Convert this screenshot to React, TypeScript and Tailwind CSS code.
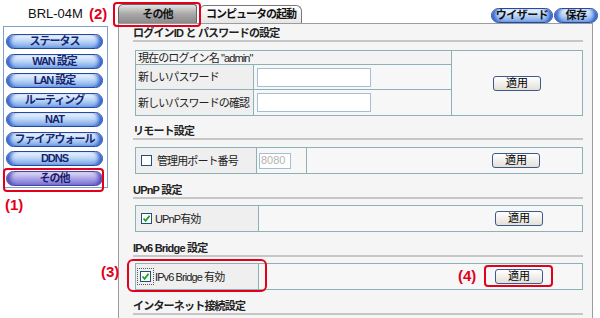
import React from "react";

const FONT = "font-['Liberation_Sans','Noto_Sans_CJK_JP',sans-serif]";

function NavButton({ label, active }: { label: string; active?: boolean }) {
  return (
    <div
      className={`h-[15px] w-[97px] rounded-full border flex items-center justify-center text-[11px] font-bold leading-none tracking-[-1px] ${
        active
          ? "border-[#4a44a8] bg-linear-to-b from-[#e2e0f8] via-[#aaa4e8] to-[#7a73d2] text-[#1c1a6a] shadow-[inset_6px_0_4px_-3px_#4c44b0,inset_-6px_0_4px_-3px_#4c44b0]"
          : "border-[#2449a3] bg-linear-to-b from-[#f0f6fe] via-[#b9d4f6] to-[#77a3e6] text-[#14246e] shadow-[inset_6px_0_4px_-3px_#2458c8,inset_-6px_0_4px_-3px_#2458c8]"
      }`}
    >
      {label}
    </div>
  );
}

function TopButton({ label, w }: { label: string; w: string }) {
  return (
    <div
      className={`${w} h-[15px] rounded-full border border-[#2449a3] bg-linear-to-b from-[#f0f6fe] via-[#b9d4f6] to-[#77a3e6] shadow-[inset_6px_0_4px_-3px_#2458c8,inset_-6px_0_4px_-3px_#2458c8] flex items-center justify-center text-[11px] font-bold leading-none tracking-[-0.5px] text-[#111]`}
    >
      {label}
    </div>
  );
}

function ApplyButton() {
  return (
    <div className="h-[15px] w-[48px] rounded-[3px] border border-[#3d5a8e] bg-linear-to-b from-white to-[#e4e0d8] flex items-center justify-center text-[11px] leading-none text-black">
      適用
    </div>
  );
}

function Heading({ children, className = "" }: { children: React.ReactNode; className?: string }) {
  return (
    <div
      className={`h-[18px] w-[450px] border-b-2 border-[#c6c6c6] flex items-end pb-[1px] text-[11px] font-bold leading-[12px] tracking-[-0.8px] text-[#222] ${className}`}
    >
      {children}
    </div>
  );
}

function Checkbox({ checked }: { checked?: boolean }) {
  return (
    <span className="w-[11px] h-[11px] border border-[#1c5180] bg-white flex items-center justify-center shrink-0">
      {checked && (
        <svg width="9" height="9" viewBox="0 0 9 9">
          <path d="M1.5 4.5 L3.6 6.8 L7.6 1.8" stroke="#1fa01f" strokeWidth="1.8" fill="none" />
        </svg>
      )}
    </span>
  );
}

const cellB = "border border-[#8cb2b5]";
const label = "text-[11px] leading-[12px] tracking-[-0.9px] text-[#222]";

export default function App() {
  return (
    <div className={`relative w-[600px] h-[318px] overflow-hidden bg-white flex ${FONT}`}>
      {/* Left column */}
      <div className="w-[118px] shrink-0 flex flex-col">
        <div className="h-[26px] flex items-start pt-[6px] pl-[28px]">
          <span className="text-[13px] leading-[16px] text-[#111]">BRL-04M</span>
          <span className="ml-[6px] text-[15px] font-bold leading-[16px] text-[#e3001b]">(2)</span>
        </div>
        <div className="ml-[3px] w-[105px] border border-[#7e9fd0] pt-[7px] pb-[1px] pl-[2px] flex flex-col gap-[4.5px]">
          <NavButton label="ステータス" />
          <NavButton label="WAN 設定" />
          <NavButton label="LAN 設定" />
          <NavButton label="ルーティング" />
          <NavButton label="NAT" />
          <NavButton label="ファイアウォール" />
          <NavButton label="DDNS" />
          <NavButton label="その他" active />
        </div>
        <div className="mt-[9px] pl-[5px] text-[15px] font-bold leading-[16px] text-[#e3001b]">(1)</div>
      </div>

      {/* Right column */}
      <div className="flex-1 flex flex-col">
        <div className="h-[23px] flex items-end">
          <div className="w-[79px] h-[19px] rounded-tl-[5px] rounded-tr-[3px] border border-b-0 border-[#666] bg-linear-to-b from-[#e4e4e4] via-[#a8a8a8] to-[#8a8a8a] flex items-center justify-center text-[11px] font-bold tracking-[-0.8px] text-[#111]">
            その他
          </div>
          <div className="ml-[3px] w-[102px] h-[18px] rounded-tl-[5px] rounded-tr-[6px] border border-b-0 border-[#777] bg-linear-to-b from-white to-[#e6e6e6] flex items-center justify-center text-[11px] font-bold tracking-[-1px] text-[#111]">
            コンピュータの起動
          </div>
          <div className="flex-1" />
          <div className="flex gap-[1px] mr-[2px]">
            <TopButton label="ウイザード" w="w-[62px]" />
            <TopButton label="保存" w="w-[44px]" />
          </div>
        </div>

        <div className="w-[475px] flex-1 border-t border-l border-r border-[#9c9c9c] bg-[#f5f5f5] pl-[14px] flex flex-col">
          <Heading>ログインID と パスワードの設定</Heading>
          <table className={`mt-[8px] ml-[2px] w-[448px] border-collapse table-fixed ${cellB}`}>
            <colgroup>
              <col className="w-[118px]" />
              <col className="w-[198px]" />
              <col />
            </colgroup>
            <tbody>
              <tr className="h-[14px]">
                <td colSpan={2} className={`${cellB} bg-[#f3f3f3] px-[2px] ${label}`}>
                  現在のログイン名 "admin"
                </td>
                <td rowSpan={3} className={`${cellB} bg-[#f7f7f7] align-middle`}>
                  <div className="flex justify-center">
                    <ApplyButton />
                  </div>
                </td>
              </tr>
              <tr className="h-[25px]">
                <td className={`${cellB} bg-[#efefef] px-[2px] ${label}`}>新しいパスワード</td>
                <td className={`${cellB} bg-[#f7f7f7] px-[3px]`}>
                  <div className="w-[114px] h-[19px] border border-[#a6bdd6] bg-white" />
                </td>
              </tr>
              <tr className="h-[26px]">
                <td className={`${cellB} bg-[#efefef] px-[2px] ${label}`}>新しいパスワードの確認</td>
                <td className={`${cellB} bg-[#f7f7f7] px-[3px]`}>
                  <div className="w-[114px] h-[19px] border border-[#a6bdd6] bg-white" />
                </td>
              </tr>
            </tbody>
          </table>

          <Heading className="mt-[6px]">リモート設定</Heading>
          <table className={`mt-[7px] ml-[2px] w-[448px] border-collapse table-fixed ${cellB}`}>
            <colgroup>
              <col className="w-[121px]" />
              <col className="w-[50px]" />
              <col />
            </colgroup>
            <tbody>
              <tr className="h-[26px]">
                <td className={`${cellB} bg-[#efefef] pl-[5px]`}>
                  <div className="flex items-center gap-[5px]">
                    <Checkbox />
                    <span className={label}>管理用ポート番号</span>
                  </div>
                </td>
                <td className={`${cellB} bg-[#f7f7f7] pl-[2px]`}>
                  <div className="w-[32px] h-[16px] border border-[#a6bdd6] bg-white flex items-center pl-[1px] text-[11px] leading-none text-[#b4b4b4]">
                    8080
                  </div>
                </td>
                <td className={`${cellB} bg-[#f7f7f7]`}>
                  <div className="flex justify-end pr-[42px]">
                    <ApplyButton />
                  </div>
                </td>
              </tr>
            </tbody>
          </table>

          <Heading className="mt-[7px]">UPnP 設定</Heading>
          <table className={`mt-[6px] ml-[2px] w-[448px] border-collapse table-fixed ${cellB}`}>
            <colgroup>
              <col className="w-[123px]" />
              <col />
            </colgroup>
            <tbody>
              <tr className="h-[26px]">
                <td className={`${cellB} bg-[#efefef] pl-[5px]`}>
                  <div className="flex items-center gap-[3px]">
                    <Checkbox checked />
                    <span className={label}>UPnP有効</span>
                  </div>
                </td>
                <td className={`${cellB} bg-[#f7f7f7]`}>
                  <div className="flex justify-end pr-[39px]">
                    <ApplyButton />
                  </div>
                </td>
              </tr>
            </tbody>
          </table>

          <Heading className="mt-[7px]">IPv6 Bridge 設定</Heading>
          <table className={`mt-[6px] ml-[2px] w-[448px] border-collapse table-fixed ${cellB}`}>
            <colgroup>
              <col className="w-[123px]" />
              <col />
            </colgroup>
            <tbody>
              <tr className="h-[26px]">
                <td className={`${cellB} bg-[#efefef] pl-[1px]`}>
                  <div className="flex items-center gap-[1px]">
                    <span className="p-[2px] border border-dotted border-[#555] flex">
                      <Checkbox checked />
                    </span>
                    <span className={label}>IPv6 Bridge 有効</span>
                  </div>
                </td>
                <td className={`${cellB} bg-[#f7f7f7]`}>
                  <div className="flex justify-end pr-[39px]">
                    <ApplyButton />
                  </div>
                </td>
              </tr>
            </tbody>
          </table>

          <Heading className="mt-[7px]">インターネット接続設定</Heading>
        </div>
      </div>

      {/* Annotation overlays */}
      <div className="absolute left-[113px] top-[2px] w-[88px] h-[25px] rounded-[4px] border-2 border-[#e3001b]" />
      <div className="absolute left-[3px] top-[168px] w-[101px] h-[24px] rounded-[4px] border-2 border-[#e3001b]" />
      <div className="absolute left-[127px] top-[259px] w-[140px] h-[33px] rounded-[6px] border-2 border-[#e3001b]" />
      <div className="absolute left-[484px] top-[265px] w-[69px] h-[22px] rounded-[4px] border-2 border-[#e3001b]" />
      <div className="absolute left-[101px] top-[264px] text-[15px] font-bold leading-[16px] text-[#e3001b]">(3)</div>
      <div className="absolute left-[458px] top-[268px] text-[15px] font-bold leading-[16px] text-[#e3001b]">(4)</div>
    </div>
  );
}
